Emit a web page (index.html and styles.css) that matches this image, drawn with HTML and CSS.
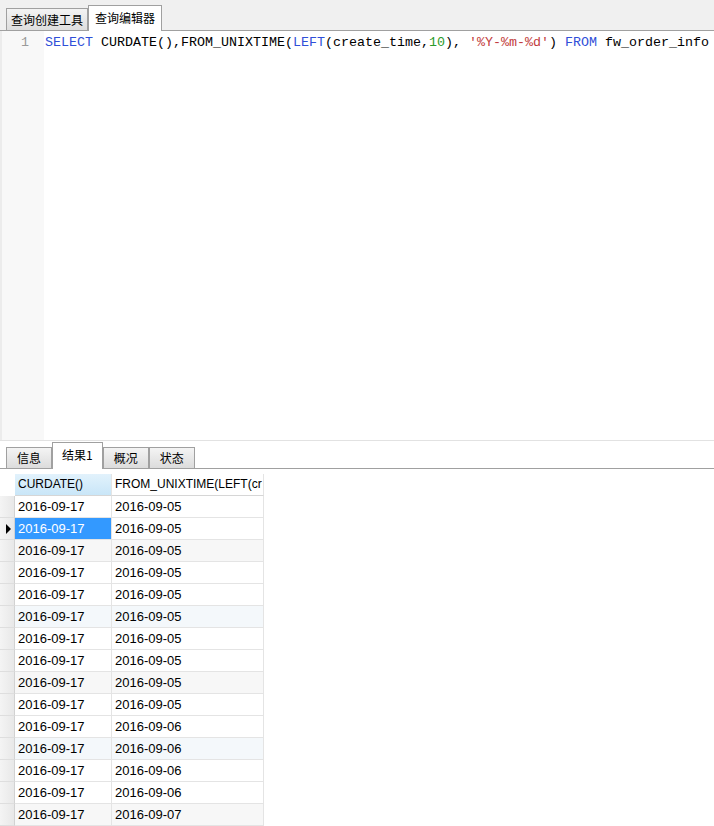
FILE: index.html
```html
<!DOCTYPE html>
<html>
<head>
<meta charset="utf-8">
<link rel="stylesheet" href="styles.css">
</head>
<body>
<div class="app">
  <div class="toptabs">
    <div class="ttab ttab-off">查询创建工具</div>
    <div class="ttab ttab-on">查询编辑器</div>
  </div>
  <div class="editor">
    <div class="gutter"><div class="ln">1</div></div>
    <div class="code"><span class="kw">SELECT</span> CURDATE(),FROM_UNIXTIME(<span class="kw">LEFT</span>(create_time,<span class="num">10</span>), <span class="str">'%Y-%m-%d'</span>) <span class="kw">FROM</span> fw_order_info</div>
  </div>
  <div class="restabs">
    <div class="rtab rtab-off">信息</div>
    <div class="rtab rtab-on">结果1</div>
    <div class="rtab rtab-off">概况</div>
    <div class="rtab rtab-off">状态</div>
  </div>
  <div class="gridwrap">
    <div class="grid">
      <div class="c ind hd-ind"></div>
      <div class="c hd hd-sel">CURDATE()</div>
      <div class="c hd">FROM_UNIXTIME(LEFT(cr</div>

      <div class="c ind"></div><div class="c">2016-09-17</div><div class="c">2016-09-05</div>
      <div class="c ind"><span class="arrow"></span></div><div class="c sel">2016-09-17</div><div class="c">2016-09-05</div>
      <div class="c ind"></div><div class="c alt">2016-09-17</div><div class="c alt">2016-09-05</div>
      <div class="c ind"></div><div class="c">2016-09-17</div><div class="c">2016-09-05</div>
      <div class="c ind"></div><div class="c">2016-09-17</div><div class="c">2016-09-05</div>
      <div class="c ind"></div><div class="c alt2">2016-09-17</div><div class="c alt2">2016-09-05</div>
      <div class="c ind"></div><div class="c">2016-09-17</div><div class="c">2016-09-05</div>
      <div class="c ind"></div><div class="c">2016-09-17</div><div class="c">2016-09-05</div>
      <div class="c ind"></div><div class="c alt">2016-09-17</div><div class="c alt">2016-09-05</div>
      <div class="c ind"></div><div class="c">2016-09-17</div><div class="c">2016-09-05</div>
      <div class="c ind"></div><div class="c">2016-09-17</div><div class="c">2016-09-06</div>
      <div class="c ind"></div><div class="c alt2">2016-09-17</div><div class="c alt2">2016-09-06</div>
      <div class="c ind"></div><div class="c">2016-09-17</div><div class="c">2016-09-06</div>
      <div class="c ind"></div><div class="c">2016-09-17</div><div class="c">2016-09-06</div>
      <div class="c ind"></div><div class="c alt">2016-09-17</div><div class="c alt">2016-09-07</div>
    </div>
  </div>
</div>
</body>
</html>
```
FILE: styles.css
```css
html, body {
  margin: 0;
  padding: 0;
  background: #ffffff;
}
.app {
  width: 714px;
  height: 826px;
  overflow: hidden;
  display: flex;
  flex-direction: column;
  font-family: "Liberation Sans", "Noto Sans CJK SC", sans-serif;
}
/* top tabs */
.toptabs {
  height: 30px;
  flex: none;
  background: #f0f0f0;
  border-bottom: 1px solid #a0a0a0;
  display: flex;
  align-items: flex-end;
  padding-left: 6px;
}
.ttab {
  box-sizing: border-box;
  margin-bottom: -1px;
  border: 1px solid #a0a0a0;
  font-family: "Noto Sans CJK SC", sans-serif;
  font-size: 12px;
  color: #000;
  white-space: nowrap;
}
.ttab-off {
  height: 23px;
  padding: 2px 4px 0;
  line-height: 18px;
  background: linear-gradient(#f3f3f3, #dedede);
}
.ttab-on {
  height: 26px;
  padding: 3px 6px 0;
  line-height: 17px;
  background: #ffffff;
  border-bottom: none;
}
/* editor */
.editor {
  height: 409px;
  flex: none;
  display: flex;
  background: #ffffff;
  border-bottom: 1px solid #e2e2e2;
}
.gutter {
  width: 42px;
  flex: none;
  background: #f8f8f8;
  border-left: 2px solid #ececec;
}
.ln, .code {
  font-family: "Liberation Mono", monospace;
  font-size: 13.33px;
  line-height: 16px;
  padding-top: 4px;
  white-space: pre;
}
.ln {
  text-align: right;
  padding-right: 15px;
  color: #9a9a9a;
}
.code {
  color: #000;
  padding-left: 1px;
}
.kw { color: #2f4fd8; }
.num { color: #2a9a2a; }
.str { color: #c23c3c; }
/* result tabs */
.restabs {
  height: 27px;
  flex: none;
  background: #ffffff;
  border-bottom: 1px solid #a0a0a0;
  display: flex;
  align-items: flex-end;
  padding-left: 6px;
}
.rtab {
  box-sizing: border-box;
  margin-bottom: -1px;
  border: 1px solid #a0a0a0;
  font-family: "Noto Sans CJK SC", sans-serif;
  font-size: 12px;
  color: #000;
  white-space: nowrap;
}
.rtab-off {
  height: 22px;
  padding: 1px 10px 0;
  line-height: 17px;
  background: linear-gradient(#f4f4f4, #dcdcdc);
}
.rtab-on {
  height: 27px;
  padding: 3px 9px 0;
  line-height: 17px;
  background: #ffffff;
  border-bottom: none;
}
/* grid */
.gridwrap {
  flex: 1;
  padding-top: 5px;
  background: #ffffff;
}
.grid {
  display: grid;
  grid-template-columns: 15px 97px 152px;
  grid-auto-rows: 22px;
  width: 264px;
}
.c {
  box-sizing: border-box;
  border-right: 1px solid #e4e4e4;
  border-bottom: 1px solid #e4e4e4;
  padding-left: 3px;
  font-size: 13px;
  line-height: 21px;
  color: #000;
  white-space: nowrap;
  overflow: hidden;
}
.hd {
  font-size: 12px;
  border-bottom-color: #d6d6d6;
}
.hd-sel {
  background: linear-gradient(#e2f2fc, #c9e6f8);
}
.ind {
  padding: 0 3px 0 0;
  background: linear-gradient(90deg, #f4f4f4, #e8e8e8);
  border-right: 1px solid #d2d2d2;
  border-bottom-color: #dedede;
  display: flex;
  align-items: center;
  justify-content: flex-end;
}
.hd-ind {
  background: #ffffff;
  border-right: none;
  border-bottom-color: #ffffff;
}
.arrow {
  width: 0;
  height: 0;
  border-top: 5px solid transparent;
  border-bottom: 5px solid transparent;
  border-left: 5px solid #000;
}
.sel {
  background: #3399ff;
  color: #ffffff;
}
.alt { background: #f7f7f7; }
.alt2 { background: #f4f8fb; }
```
